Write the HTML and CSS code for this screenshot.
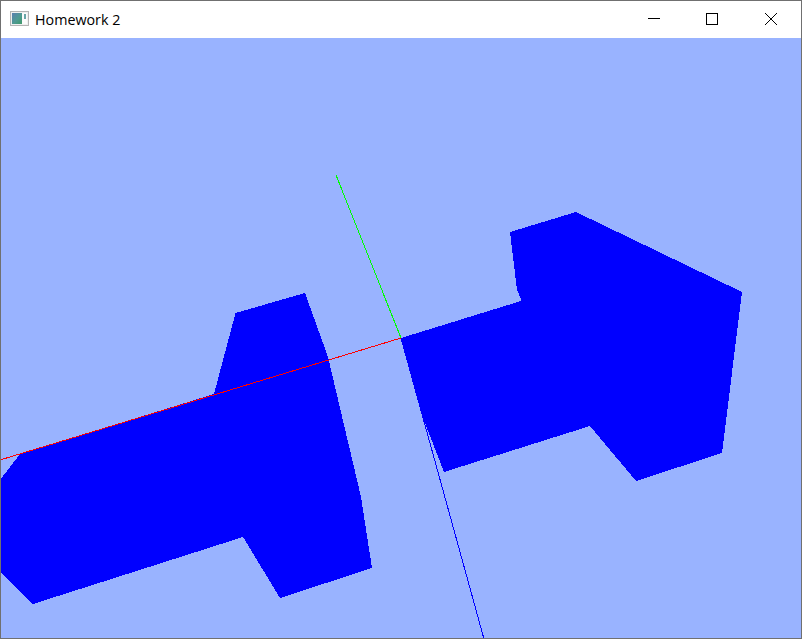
FILE: index.html
```html
<!DOCTYPE html>
<html lang="en">
<head>
<meta charset="utf-8">
<title>Homework 2</title>
<link rel="stylesheet" href="styles.css">
</head>
<body>
<div class="window">
  <header class="titlebar">
    <svg class="app-icon" width="20" height="16" viewBox="0 0 20 16">
      <defs>
        <linearGradient id="pane" x1="0" y1="0" x2="1" y2="1">
          <stop offset="0" stop-color="#5a7fb0"/>
          <stop offset="0.55" stop-color="#4f9a92"/>
          <stop offset="1" stop-color="#3f9a6a"/>
        </linearGradient>
      </defs>
      <rect x="0.5" y="0.5" width="18" height="14" fill="#efefef" stroke="#b4b4b4"/>
      <rect x="2" y="2" width="10" height="11" fill="url(#pane)"/>
      <rect x="12" y="2" width="5" height="11" fill="#fbfbfb"/>
      <rect x="14" y="3" width="2" height="5" fill="#6aa5a8"/>
    </svg>
    <span class="title">Homework 2</span>
    <div class="controls">
      <button class="control"><svg width="12" height="12" viewBox="0 0 12 12"><path d="M0 5.5H12" stroke="#000" fill="none"/></svg></button>
      <button class="control"><svg width="12" height="12" viewBox="0 0 12 12"><rect x="0.5" y="0.5" width="11" height="11" stroke="#000" fill="none"/></svg></button>
      <button class="control"><svg width="12" height="12" viewBox="0 0 12 12"><path d="M0 0L12 12M12 0L0 12" stroke="#000" fill="none"/></svg></button>
    </div>
  </header>
  <svg class="scene" width="800" height="600" viewBox="1 38 800 600">
    <polygon class="solid" points="401,338 521,301 521,299 517,290 510,232 576,212 742,292 722,453 636,481 590,426 444,472 423,418"/>
    <polygon class="solid" points="0,480 20,454 214,394 235.5,313 305,293 328,357 361,497 372,568 280,598 243,537 33,604 0,572"/>
    <line class="axis-x" x1="0" y1="460" x2="401" y2="338"/>
    <line class="axis-y" x1="336" y1="175" x2="401" y2="338"/>
    <line class="axis-z" x1="401" y1="338" x2="484" y2="639"/>
  </svg>
</div>
</body>
</html>
```
FILE: styles.css
```css
html, body {
  margin: 0;
  padding: 0;
  background: #fff;
}
.window {
  width: 802px;
  height: 639px;
  box-sizing: border-box;
  border: 1px solid #707070;
  display: flex;
  flex-direction: column;
  overflow: hidden;
}
.titlebar {
  height: 37px;
  flex: none;
  display: flex;
  align-items: center;
  background: #fff;
  padding-left: 9px;
}
.app-icon {
  flex: none;
  margin-right: 5px;
  margin-bottom: 2px;
}
.title {
  font: 14.3px "Open Sans", sans-serif;
  color: #000;
  flex: 1;
}
.controls {
  display: grid;
  grid-template-columns: 56px 60px 58px;
  height: 100%;
  padding: 0 1px 1px 0;
  box-sizing: border-box;
}
.control {
  height: 100%;
  border: 0;
  padding: 0;
  background: none;
  display: flex;
  align-items: center;
  justify-content: center;
}
.scene {
  display: block;
  flex: none;
  background: #99b3ff;
}
.solid {
  fill: #00f;
  shape-rendering: crispEdges;
}
.axis-x, .axis-y, .axis-z {
  stroke-width: 1;
  shape-rendering: crispEdges;
}
.axis-x { stroke: #f00; }
.axis-y { stroke: #0f0; }
.axis-z { stroke: #00f; }
```
